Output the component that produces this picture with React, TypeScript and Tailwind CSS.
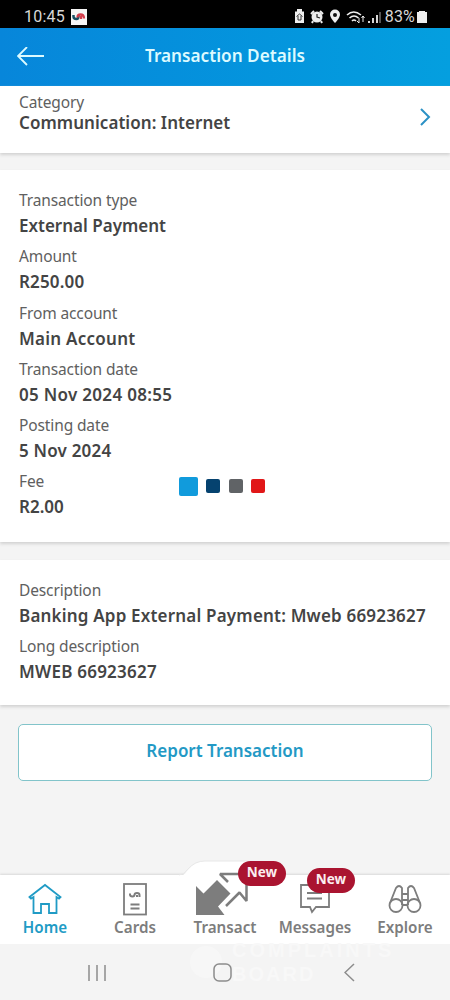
import { clsx } from 'clsx';
import type { ReactNode } from 'react';

const details = [
  { label: 'Transaction type', value: 'External Payment', tracking: '' },
  { label: 'Amount', value: 'R250.00', tracking: 'tracking-[0.15px]' },
  { label: 'From account', value: 'Main Account', tracking: 'tracking-[0.25px]' },
  { label: 'Transaction date', value: '05 Nov 2024 08:55', tracking: 'tracking-[0.3px]' },
  { label: 'Posting date', value: '5 Nov 2024', tracking: 'tracking-[0.2px]' },
  { label: 'Fee', value: 'R2.00', tracking: '' },
];

const descriptions = [
  { label: 'Description', value: 'Banking App External Payment: Mweb 66923627', tracking: 'tracking-[0.19px]' },
  { label: 'Long description', value: 'MWEB 66923627', tracking: 'tracking-[0.23px]' },
];

function Field({ label, value, tracking }: { label: string; value: string; tracking: string }) {
  return (
    <div className="h-[56.3px]">
      <div className="text-[15.5px] leading-[25px] tracking-[-0.12px] text-[#606060]">{label}</div>
      <div className={clsx('whitespace-nowrap text-[17px] font-semibold leading-[26px] text-[#444]', tracking)}>
        {value}
      </div>
    </div>
  );
}

function StatusBar() {
  return (
    <div className="flex h-[28px] items-center bg-black pl-6 pr-[23px] pt-[5px] font-[Roboto,sans-serif] text-[#d8d8d8]">
      <span className="text-[16px] tracking-[0.2px]">10:45</span>
      <svg className="ml-[6px]" width="16" height="16" viewBox="0 0 16 16">
        <rect width="16" height="16" fill="#f5f5f5" />
        <path d="M2.500 6v1.500q0 2.500 3 2.500 2 0 2-3" fill="none" stroke="#174f62" strokeWidth="2.500" />
        <path d="M6.500 8.500q0-3 3-3 3.500 0 3.500 4M10 7v3" fill="none" stroke="#d23d4b" strokeWidth="2.300" />
      </svg>
      <div className="ml-auto flex items-center">
        <svg width="88" height="18" viewBox="0 0 88 18" fill="none" stroke="#eee">
          <path d="M1 3.500h2V1h5v2.500h2V15H1z" fill="#eee" stroke="none" />
          <path d="M2.500 8.500l3-2.500 3 2.500M4 8v4h3V8" stroke="#333" />
          <circle cx="23" cy="9" r="5.500" fill="#eee" stroke="none" />
          <path d="M17 6l3-3m6 0l3 3M19 13l-1 2m9-2l1 2" strokeWidth="2" />
          <path d="M23 6v3l3 1" stroke="#222" strokeWidth="1.200" />
          <path d="M41 15s-5-5-5-8.500a5 5 0 0110 0C46 10 41 15 41 15z" fill="#eee" stroke="none" />
          <circle cx="41" cy="7" r="2" fill="#111" stroke="none" />
          <path d="M53 7q6.500-6 14 0M55.500 10q4.500-4 9 0M58 13q2-2 4 0" strokeWidth="1.600" />
          <path d="M65 10v5m-2-2l2 2M69 14V8m-1.500 2L69 8l1.500 2" />
          <path d="M75 15v-2m4 2v-5m4 5V7" strokeWidth="1.800" />
          <path d="M86 15V4" stroke="#555" strokeWidth="2" />
        </svg>
        <span className="ml-[3px] text-[16px] tracking-[0.2px]">83%</span>
        <svg className="ml-[2px]" width="10" height="14" viewBox="0 0 10 14">
          <path d="M0 2h2V1h6v1h2v11H0z" fill="#eee" />
        </svg>
      </div>
    </div>
  );
}

function Card({ className, children }: { className: string; children: ReactNode }) {
  return <section className={clsx('bg-white pl-[19px] shadow-[0_2px_3px_#d2d2d2]', className)}>{children}</section>;
}

function NewBadge({ className }: { className: string }) {
  return (
    <span
      className={clsx(
        'absolute flex h-[25px] w-[48px] items-center justify-center rounded-full bg-[#aa1430] pb-[3px] text-[13.5px] font-bold text-[#fbeef0]',
        className
      )}
    >
      New
    </span>
  );
}

function NavItem({ label, active, children }: { label: string; active?: boolean; children: ReactNode }) {
  return (
    <button
      className={clsx(
        'relative flex w-[90px] flex-col items-center text-[15.2px] font-semibold',
        active ? 'text-[#209bc5]' : 'text-[#7d7d7d]'
      )}
    >
      {children}
      <span className="leading-[22.5px]">{label}</span>
    </button>
  );
}

function BottomNav() {
  return (
    <nav className="relative flex h-[69px] bg-white pt-[3px] shadow-[0_-1px_2px_#d8d8d8]">
      {/* raised area behind Transact */}
      <svg className="absolute left-[170px] top-[-15px]" width="110" height="18" viewBox="0 0 110 18">
        <path d="M9 16q5 0 9-6Q25 1 35 1h40q10 0 17 9 4 6 9 6v2H9z" fill="white" />
        <path d="M9 15q5 0 9-6Q25 1 35 1h40q10 0 17 9 4 6 9 6" fill="none" stroke="#e8e8e8" />
      </svg>
      <NavItem label="Home" active>
        <svg width="36" height="38" viewBox="0 0 36 38" fill="none" stroke="currentColor" strokeWidth="1.800">
          <path d="M2.500 19L18 7l15.500 12-1.500 1.500-2.500-1.500v16H22v-9h-8v9H6.500V19L4 20.500z" />
        </svg>
      </NavItem>
      <NavItem label="Cards">
        <svg width="26" height="38" viewBox="0 0 26 38" fill="none" stroke="currentColor" strokeWidth="1.800">
          <rect x="2" y="6" width="22" height="30.500" />
          <path d="M8 15.500v1q0 2 2.500 2 2 0 2-2M12.500 17q0-2 2.500-2t2.500 2v2M15 17v2" strokeWidth="2" />
          <path d="M8.500 26.500h9m-9 4h9" />
        </svg>
      </NavItem>
      <NavItem label="Transact">
        <svg
          className="relative -left-[3px] overflow-visible"
          width="54"
          height="38"
          viewBox="0 0 54 38"
          fill="none"
          stroke="currentColor"
          strokeWidth="2.500"
          strokeLinejoin="bevel"
        >
          <path d="M1 8l7.500 7.500L22 2l13.500 13.500L23 28.500l6.500 8.500H1z" fill="currentColor" stroke="none" />
          <path d="M33 4L25-4h26.500v27l-7-8.500L31 28" />
        </svg>
        <NewBadge className="left-[58px] top-[-17px]" />
      </NavItem>
      <NavItem label="Messages">
        <svg width="32" height="38" viewBox="0 0 32 38" fill="none" stroke="currentColor" strokeWidth="1.800">
          <path d="M2 7h28v22H17l-4 5-2-5H2z" />
          <path d="M8 15h15M8 20.500h15" />
        </svg>
        <NewBadge className="left-[37px] top-[-10px]" />
      </NavItem>
      <NavItem label="Explore">
        <svg width="34" height="38" viewBox="0 0 34 38" fill="none" stroke="currentColor" strokeWidth="1.800">
          <circle cx="8" cy="27.500" r="6.500" />
          <circle cx="26" cy="27.500" r="6.500" />
          <path d="M2 25L8 10q3-4 6 0v17M32 25L26 10q-3-4-6 0v17M14 16h6M14 22h6M14 27h6" />
        </svg>
      </NavItem>
    </nav>
  );
}

export default function App() {
  return (
    <div className="flex h-[1000px] w-[450px] flex-col overflow-hidden bg-[#f4f4f4] font-['Noto_Sans',sans-serif]">
      <StatusBar />
      <header className="flex h-[58px] items-center bg-linear-to-r from-[#0786da] to-[#049fdf] pl-[17px] pr-[44px] text-[#dcfaff]">
        <svg width="27" height="20" viewBox="0 0 27 20" fill="none" stroke="currentColor" strokeWidth="1.800">
          <path d="M27 9H1M10 0L1 9l9 9" />
        </svg>
        <h1 className="flex-1 pb-[3px] text-center text-[17.2px] font-semibold">Transaction Details</h1>
      </header>

      <Card className="flex h-[67px] shrink-0 pr-[19px]">
        <div className="flex-1 pt-[5px]">
          <div className="text-[15.5px] leading-[22px] tracking-[-0.12px] text-[#606060]">Category</div>
          <div className="text-[17px] font-semibold leading-[20px] tracking-[0.05px] text-[#444]">
            Communication: Internet
          </div>
        </div>
        <svg className="mt-[22px]" width="12" height="18" viewBox="0 0 12 18" fill="none" stroke="#2b91c5" strokeWidth="2">
          <path d="M2 1l8 8-8 8" />
        </svg>
      </Card>

      <Card className="relative mt-[17px] h-[372px] shrink-0 pt-[18px]">
        {details.map((item) => (
          <Field key={item.label} {...item} />
        ))}
        {/* Loading indicator floats over the details */}
        <div className="absolute left-[179px] top-[306.5px] flex items-center">
          <span className="size-[19px] rounded-[2px] bg-[#119bdc]" />
          <span className="ml-[8px] size-[14px] rounded-[2px] bg-[#05426f]" />
          <span className="ml-[9px] size-[14px] rounded-[2px] bg-[#606366]" />
          <span className="ml-[8px] size-[14px] rounded-[2px] bg-[#e11718]" />
        </div>
      </Card>

      <Card className="mt-[18px] h-[145px] shrink-0 pt-[17.5px]">
        {descriptions.map((item) => (
          <Field key={item.label} {...item} />
        ))}
      </Card>

      <button className="mx-[18px] mt-[19px] h-[57px] shrink-0 rounded-[5px] border border-[#82c4ca] bg-white pb-[3px] text-[17px] font-semibold text-[#2399c5]">
        Report Transaction
      </button>

      <div className="mt-auto">
        <BottomNav />
        <div className="relative flex h-[56px] items-center bg-[#f4f4f4] pl-[88px] text-[#8c8c8c]">
          {/* faint watermark behind the system buttons */}
          <div className="absolute left-[190px] top-[-6px] flex items-center gap-[10px] font-['Liberation_Sans',sans-serif] text-[20px] font-bold leading-[24px] text-[#f8f8f8]">
            <span className="size-[32px] rounded-full bg-[#f7f7f7]" />
            <div className="flex flex-col">
              <div className="tracking-[3px]">COMPLAINTS</div>
              <div className="tracking-[2px]">BOARD</div>
            </div>
          </div>
          <svg className="relative top-px" width="18" height="18" viewBox="0 0 18 18" stroke="currentColor" strokeWidth="1.500">
            <path d="M1 1v16M9 1v16M17 1v16" />
          </svg>
          <svg className="relative ml-[107px]" width="19" height="19" viewBox="0 0 19 19" fill="none" stroke="currentColor" strokeWidth="1.500">
            <rect x="1" y="1" width="17" height="17" rx="5" />
          </svg>
          <svg className="relative ml-[112px]" width="11" height="19" viewBox="0 0 11 19" fill="none" stroke="currentColor" strokeWidth="1.500">
            <path d="M10 1L1 9.500l9 8.500" />
          </svg>
        </div>
      </div>
    </div>
  );
}
